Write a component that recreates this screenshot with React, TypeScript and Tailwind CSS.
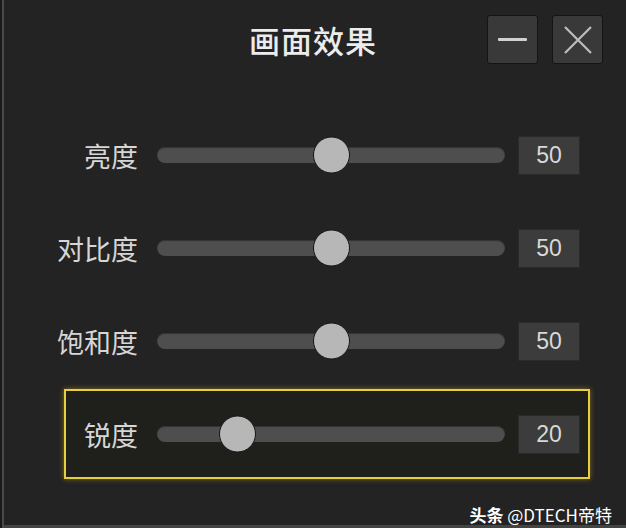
import React from "react";

const rows = [
  { label: "亮度", value: 50 },
  { label: "对比度", value: 50 },
  { label: "饱和度", value: 50 },
  { label: "锐度", value: 20, active: true },
];

const font = { fontFamily: '"Noto Sans CJK SC", "Noto Sans", sans-serif' };

function Row({ label, value, active }: { label: string; value: number; active?: boolean }) {
  const left = (value / 100) * (348 - 36);
  return (
    <div
      className={
        "ml-[64px] w-[526px] h-[90px] border-2 flex items-center " +
        (active
          ? "border-[#e6cf3c] bg-[#1f201c] shadow-[0_0_5px_rgba(190,150,30,0.65)]"
          : "border-transparent")
      }
    >
      <div className="w-[72px] shrink-0 flex justify-end whitespace-nowrap text-[27px] leading-none text-[#d6d6d6]">
        {label}
      </div>
      <div className="ml-[19px] w-[348px] h-[16px] shrink-0 rounded-full bg-[#4e4e4e] relative shadow-[inset_0_1px_1px_rgba(0,0,0,0.35)]">
        <div
          className="absolute top-1/2 -translate-y-1/2 w-[37px] h-[37px] rounded-full bg-[#b7b7b7] border border-[#151515]"
          style={{ left }}
        />
      </div>
      <div
        className="ml-[13px] w-[62px] h-[39px] shrink-0 bg-[#3c3c3c] border border-[#2a2a2a] flex items-center justify-center text-[23px] text-[#d8d8d8]"
        style={{ fontFamily: '"Liberation Sans", Arial, sans-serif' }}
      >
        {value}
      </div>
    </div>
  );
}

export default function App() {
  return (
    <div
      className="w-[626px] h-[528px] relative overflow-hidden bg-[#232323] shadow-[inset_2px_0_0_#1a1a1a,inset_4px_0_0_#4a4a4a,inset_0_-3px_0_#444]"
      style={font}
    >
      <div className="grid grid-cols-[1fr_auto_1fr] h-[110px]">
        <div />
        <div className="pt-[24px] text-[31px] leading-none font-medium text-[#ececec] tracking-[1px]">
          画面效果
        </div>
        <div className="flex justify-end gap-[14px] pt-[15px] pr-[23px]">
          <div className="w-[51px] h-[49px] rounded-[3px] bg-[#393939] border border-[#141414] flex items-center justify-center">
            <div className="w-[29px] h-[3px] bg-[#d2d2d2] rounded-[1px]" />
          </div>
          <div className="w-[51px] h-[49px] rounded-[3px] bg-[#393939] border border-[#141414] flex items-center justify-center">
            <svg width="30" height="30" viewBox="0 0 30 30">
              <path d="M2 2 L28 28 M28 2 L2 28" stroke="#bdbdbd" strokeWidth="2.2" fill="none" />
            </svg>
          </div>
        </div>
      </div>
      <div className="flex flex-col gap-[3px]">
        {rows.map((r) => (
          <Row key={r.label} {...r} />
        ))}
      </div>
      <div className="absolute right-[14px] bottom-[5px] text-[17px] text-white whitespace-nowrap leading-none">
        <span className="font-bold">头条</span>
        <span> @DTECH帝特</span>
      </div>
    </div>
  );
}
